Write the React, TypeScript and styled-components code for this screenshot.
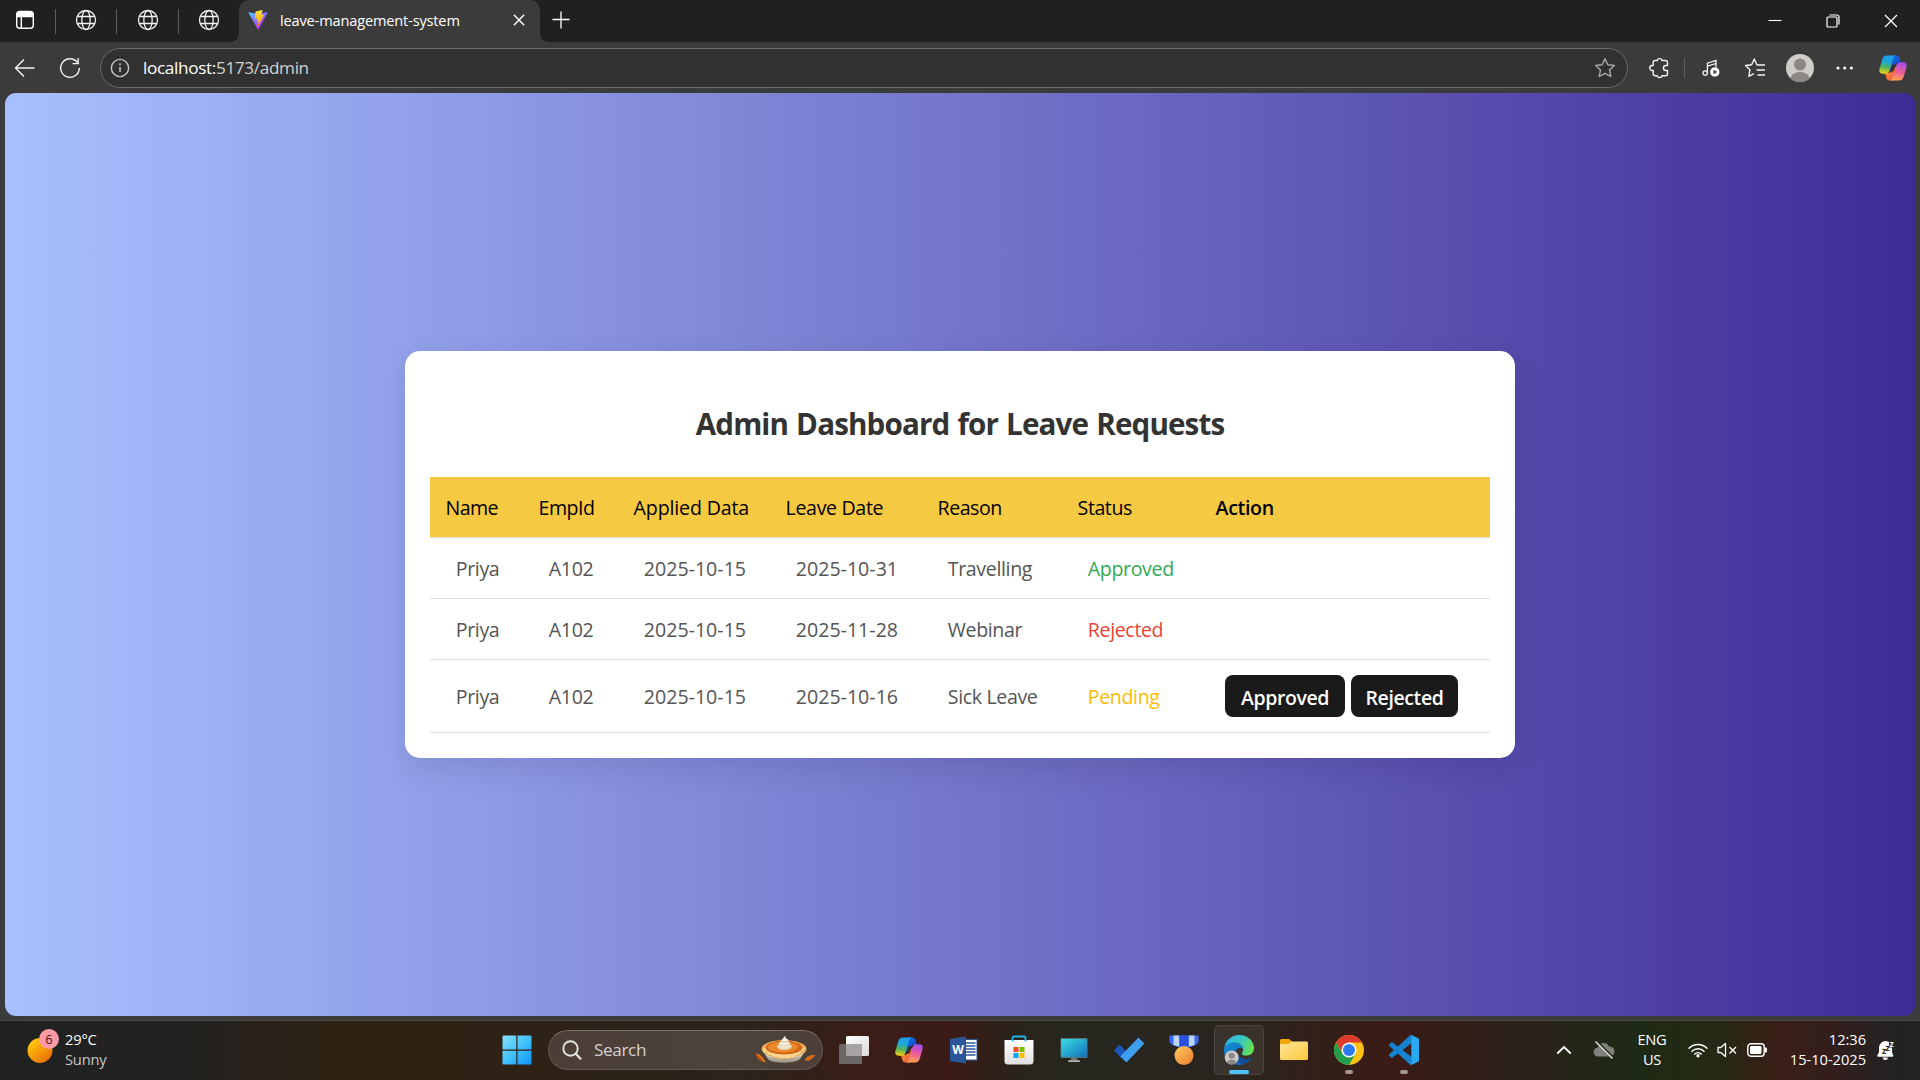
import React from 'react';
import styled, { createGlobalStyle, css } from 'styled-components';

const GlobalStyle = createGlobalStyle`
  *, *::before, *::after { box-sizing: border-box; }
  body {
    margin: 0;
    background: #3b3b3b;
    font-family: "Open Sans", "Noto Sans", sans-serif;
  }
  svg { display: block; flex: none; overflow: visible; }
`;

const Desktop = styled.div`
  width: 1920px;
  height: 1080px;
  display: flex;
  flex-direction: column;
  overflow: hidden;
  background: #3b3b3b;
`;

/* ---------- Browser tab strip ---------- */

const TabStrip = styled.header`
  height: 42px;
  flex: none;
  display: flex;
  background: #202020;
`;

const PinnedTabs = styled.div`
  width: 239px;
  padding-left: 15px;
  display: flex;
  align-items: center;
  height: 40px;
`;

const PinSeparator = styled.span<{ $before: number; $after: number }>`
  width: 1px;
  height: 25px;
  margin: 3px ${(p) => p.$after}px 0 ${(p) => p.$before}px;
  background: #5d5d5d;
`;

const ActiveTab = styled.div`
  position: relative;
  width: 301px;
  height: 42px;
  padding: 0 15px 3px 9px;
  display: flex;
  align-items: center;
  background: #3b3b3b;
  border-radius: 10px 10px 0 0;
  &::before,
  &::after {
    content: '';
    position: absolute;
    bottom: 0;
    width: 8px;
    height: 8px;
  }
  &::before {
    left: -8px;
    background: radial-gradient(circle at 0 0, transparent 7.5px, #3b3b3b 8px);
  }
  &::after {
    right: -8px;
    background: radial-gradient(circle at 100% 0, transparent 7.5px, #3b3b3b 8px);
  }
`;

const TabTitle = styled.span`
  flex: 1;
  margin-left: 12px;
  font-size: 14.6px;
  line-height: 20px;
  letter-spacing: -0.17px;
  color: #fff;
  white-space: nowrap;
`;

const NewTab = styled.div`
  margin-left: 12px;
  padding-top: 11px;
`;

const WindowControls = styled.div`
  margin-left: auto;
  padding: 14px 22px 0 0;
  display: flex;
  gap: 44px;
`;

/* ---------- Browser toolbar ---------- */

const Toolbar = styled.div`
  height: 51px;
  flex: none;
  padding: 0 12px 0 14px;
  display: flex;
  align-items: center;
`;

const NavButtons = styled.div`
  width: 86px;
  display: flex;
  gap: 23px;
`;

const AddressBar = styled.div`
  width: 1528px;
  height: 40px;
  padding: 0 11px 0 9px;
  display: flex;
  align-items: center;
  background: #313131;
  border: 1px solid #6a6a6a;
  border-radius: 20px;
`;

const Url = styled.span`
  flex: 1;
  margin-left: 13px;
  font-size: 17.2px;
  line-height: 24px;
  letter-spacing: -0.36px;
  color: #d2d2d2;
`;

const Host = styled.span`
  color: #fff;
`;

const ToolbarActions = styled.div`
  flex: 1;
  padding-left: 20px;
  display: flex;
  align-items: center;
`;

const ToolbarItem = styled.span<{ $gap: number }>`
  margin-right: ${(p) => p.$gap}px;
`;

const ToolbarSeparator = styled.span`
  width: 1px;
  height: 20px;
  margin-right: 17px;
  background: #5f5f5f;
`;

/* ---------- Web page ---------- */

const Page = styled.main`
  height: 923px;
  flex: none;
  margin: 0 5px;
  display: flex;
  align-items: center;
  justify-content: center;
  border-radius: 11px;
  background: linear-gradient(to right, #a8c0ff, #3f2b96);
`;

const Card = styled.section`
  width: 1110px;
  padding: 25px;
  background: #fff;
  border-radius: 15px;
  box-shadow: 0 10px 30px rgba(0, 0, 0, 0.1);
`;

const Title = styled.h2`
  margin: 28px 0 33px;
  font-size: 29.6px;
  line-height: 40px;
  font-weight: 700;
  letter-spacing: -0.86px;
  word-spacing: 1.2px;
  text-align: center;
  color: #333;
`;

const Table = styled.table`
  width: 1060px;
  table-layout: fixed;
  border-spacing: 0;
  font-size: 19.6px;
  white-space: nowrap;
`;

const Column = styled.col<{ $width: number }>`
  width: ${(p) => p.$width}px;
`;

const cell = css`
  border-bottom: 1px solid #ddd;
  text-align: left;
  vertical-align: middle;
`;

const HeadCell = styled.th<{ $strong?: boolean; $tracking?: number }>`
  ${cell}
  height: 61px;
  padding: 0 0 0 15.6px;
  background: #f6c942;
  color: #000;
  font-weight: ${(p) => (p.$strong ? 600 : 400)};
  letter-spacing: ${(p) => p.$tracking ?? -0.35}px;
`;

const BodyCell = styled.td<{ $tall?: boolean; $color?: string; $numeric?: boolean }>`
  ${cell}
  height: ${(p) => (p.$tall ? 73 : 61)}px;
  padding: 0 0 0 25.8px;
  color: ${(p) => p.$color ?? '#555'};
  letter-spacing: ${(p) => (p.$numeric ? 0 : -0.37)}px;
`;

const ActionCell = styled(BodyCell)`
  padding-left: 25px;
`;

const ButtonPair = styled.div`
  display: flex;
  gap: 6px;
`;

const ActionButton = styled.button<{ $width: number }>`
  width: ${(p) => p.$width}px;
  height: 42px;
  padding: 3px 0 0;
  border: 0;
  border-radius: 8px;
  background: #1a1a1a;
  color: #fff;
  font: 600 19.5px/28px 'Open Sans', 'Noto Sans', sans-serif;
  letter-spacing: -0.38px;
`;

/* ---------- Windows taskbar ---------- */

const Taskbar = styled.footer`
  height: 60px;
  margin-top: 4px;
  padding-bottom: 1px;
  flex: none;
  display: flex;
  align-items: center;
  border-top: 1px solid #474543;
  background: linear-gradient(
    to right,
    #202121 0,
    #222221 180px,
    #2f2214 340px,
    #2e2116 550px,
    #2a241a 740px,
    #3b1c16 870px,
    #3a1b15 950px,
    #2a231b 1015px,
    #26271f 1070px,
    #2a241e 1225px,
    #30211a 1300px,
    #3b1b15 1390px,
    #321f18 1460px,
    #29231a 1540px,
    #1e2a15 1640px,
    #242915 1715px,
    #3a1e17 1780px,
    #341e1b 1825px,
    #212325 1905px
  );
`;

const Weather = styled.div`
  width: 491px;
  padding: 0 0 3px 27px;
  display: flex;
  align-items: center;
  gap: 6px;
`;

const WeatherIcon = styled.div`
  padding-bottom: 6px;
`;

const SmallText = styled.div<{ $align?: string; $width?: number; $tracking?: number }>`
  width: ${(p) => (p.$width ? `${p.$width}px` : 'auto')};
  font-size: 14.7px;
  line-height: 20px;
  letter-spacing: ${(p) => p.$tracking ?? -0.2}px;
  text-align: ${(p) => p.$align ?? 'left'};
  color: #fff;
  white-space: nowrap;
`;

const Muted = styled.div`
  color: #c6c6c6;
`;

const BadgeText = styled.text`
  font: 13px 'Open Sans', sans-serif;
  fill: #3a1418;
`;

const StartButton = styled.div`
  width: 57px;
  padding-left: 11px;
`;

const SearchBox = styled.div`
  width: 275px;
  height: 40px;
  margin-right: 6px;
  padding: 0 5px 0 13px;
  display: flex;
  align-items: center;
  border: 1px solid rgba(255, 255, 255, 0.12);
  border-top-color: rgba(255, 255, 255, 0.26);
  border-radius: 20px;
  background: linear-gradient(to right, #4c3e37, #4b433b 70%, #4d3f39);
`;

const SearchLabel = styled.span`
  flex: 1;
  margin-left: 12px;
  font-size: 17.2px;
  line-height: 24px;
  letter-spacing: -0.4px;
  color: #d5d1ce;
`;

const Apps = styled.div`
  display: flex;
  gap: 5px;
`;

const AppSlot = styled.div<{ $active?: boolean }>`
  position: relative;
  width: 50px;
  height: 50px;
  display: flex;
  align-items: center;
  justify-content: center;
  border-radius: 5px;
  border: 1px solid ${(p) => (p.$active ? 'rgba(255,255,255,0.09)' : 'transparent')};
  background: ${(p) => (p.$active ? 'rgba(255,255,255,0.07)' : 'transparent')};
`;

const Indicator = styled.span<{ $active?: boolean }>`
  position: absolute;
  bottom: 0;
  width: ${(p) => (p.$active ? 20 : 8)}px;
  height: 4px;
  border-radius: 2px;
  background: ${(p) => (p.$active ? '#4cc2ff' : '#a39692')};
`;

const Tray = styled.div`
  margin-left: auto;
  padding: 0 24px 1px 0;
  display: flex;
  align-items: center;
`;

const TrayItem = styled.span<{ $gap: number; $lift?: boolean }>`
  margin-right: ${(p) => p.$gap}px;
  padding-bottom: ${(p) => (p.$lift ? 2 : 0)}px;
`;

const WordMark = styled.text`
  font: 700 12px 'Open Sans', sans-serif;
  fill: #fff;
`;

const SnoozeMark = styled.text<{ $dark?: boolean }>`
  font: 700 8.5px 'Open Sans', sans-serif;
  fill: ${(p) => (p.$dark ? '#2a1f1e' : '#fff')};
`;

/* ---------- Icons ---------- */

const WorkspaceIcon = () => (
  <svg width="20" height="20" viewBox="0 0 20 20" fill="none" stroke="#fff" strokeWidth="1.4">
    <rect x="1.7" y="1.7" width="16.6" height="16.6" rx="3" />
    <path d="M2 4.5a3 3 0 0 1 3-3h10a3 3 0 0 1 3 3v2H2z" fill="#fff" />
    <path d="M6.3 6.5v11.5" />
  </svg>
);

const GlobeIcon = () => (
  <svg width="22" height="22" viewBox="0 0 22 22" fill="none" stroke="#f2f2f2" strokeWidth="1.3">
    <circle cx="11" cy="11" r="9.5" />
    <ellipse cx="11" cy="11" rx="4.2" ry="9.5" />
    <path d="M2.4 7.5h17.2M2.4 14.5h17.2" />
  </svg>
);

const ViteIcon = () => (
  <svg width="20" height="20" viewBox="0 0 410 404" preserveAspectRatio="none">
    <defs>
      <linearGradient id="viteA" x1="6" y1="33" x2="235" y2="344" gradientUnits="userSpaceOnUse">
        <stop stopColor="#41D1FF" />
        <stop offset="1" stopColor="#BD34FE" />
      </linearGradient>
      <linearGradient id="viteB" x1="194" y1="9" x2="236" y2="293" gradientUnits="userSpaceOnUse">
        <stop stopColor="#FFEA83" />
        <stop offset=".083" stopColor="#FFDD35" />
        <stop offset="1" stopColor="#FFA800" />
      </linearGradient>
    </defs>
    <path
      fill="url(#viteA)"
      d="M399.641 59.525 215.643 388.545c-3.799 6.793-13.559 6.833-17.415.073L10.582 59.556C6.381 52.19 12.68 43.267 21.028 44.76l184.195 32.923c1.175.21 2.378.208 3.553-.006l180.343-32.87c8.32-1.517 14.649 7.337 10.522 14.719Z"
    />
    <path
      fill="url(#viteB)"
      d="M292.965 1.574 156.801 28.255a5 5 0 0 0-4.03 4.611l-8.376 141.464c-.197 3.332 2.863 5.918 6.115 5.168l37.91-8.749c3.547-.818 6.752 2.306 6.023 5.873l-11.263 55.153c-.758 3.712 2.727 6.886 6.352 5.785l23.415-7.114c3.63-1.102 7.118 2.081 6.35 5.796l-17.899 86.633c-1.12 5.419 6.088 8.374 9.094 3.728l2.008-3.103 110.954-221.428c1.858-3.707-1.346-7.935-5.418-7.15l-39.022 7.532c-3.667.707-6.787-2.708-5.752-6.296l25.469-88.291c1.036-3.594-2.095-7.012-5.766-6.293Z"
    />
  </svg>
);

const CrossIcon = ({ size, weight }: { size: number; weight: number }) => (
  <svg width={size} height={size} viewBox="0 0 14 14" stroke="#fff" strokeWidth={weight}>
    <path d="M1 1l12 12M13 1L1 13" />
  </svg>
);

const PlusIcon = () => (
  <svg width="18" height="18" viewBox="0 0 18 18" stroke="#fff" strokeWidth="1.3">
    <path d="M9 .5v17M.5 8.5h17" />
  </svg>
);

const MinimizeIcon = () => (
  <svg width="14" height="14" viewBox="0 0 14 14" stroke="#fff" strokeWidth="1.1">
    <path d="M.5 6.5h13" />
  </svg>
);

const RestoreIcon = () => (
  <svg width="14" height="14" viewBox="0 0 14 14" fill="none" stroke="#fff" strokeWidth="1.2">
    <rect x="1" y="3" width="10" height="10" rx="1" />
    <path d="M3.500 1h7.500a2 2 0 0 1 2 2v7.500" />
  </svg>
);

const BackIcon = () => (
  <svg width="22" height="22" viewBox="0 0 22 22" fill="none" stroke="#f4f4f4" strokeWidth="1.4">
    <path d="M20.5 11H1.5M10 2.5L1.5 11l8.5 8.5" />
  </svg>
);

const ReloadIcon = () => (
  <svg width="22" height="22" viewBox="0 0 22 22" fill="none" stroke="#f4f4f4" strokeWidth="1.4">
    <path d="M18.5 5.5A9.3 9.3 0 1 0 20.3 11" />
    <path d="M19.2 1v5.6h-5.6" />
  </svg>
);

const InfoIcon = () => (
  <svg width="20" height="20" viewBox="0 0 20 20" fill="none" stroke="#c4c4c4" strokeWidth="1.4">
    <circle cx="10" cy="10" r="8.6" />
    <path d="M10 9v5" strokeWidth="1.6" />
    <circle cx="10" cy="6.3" r="1" fill="#c4c4c4" stroke="none" />
  </svg>
);

const StarIcon = () => (
  <svg width="22" height="22" viewBox="0 0 22 22" fill="none" stroke="#a9a9a9" strokeWidth="1.4" strokeLinejoin="round">
    <path d="M11 1.700l2.800 6 6.500.800-4.800 4.500 1.300 6.500L11 16.300l-5.800 3.200 1.300-6.500-4.800-4.500 6.500-.800z" />
  </svg>
);

const PuzzleIcon = () => (
  <svg width="22" height="22" viewBox="0 0 22 22" fill="none" stroke="#f2f2f2" strokeWidth="1.4" strokeLinejoin="round">
    <path d="M5.200 5.500a2 2 0 0 1 2-2h1.900a2.600 2.600 0 0 1 5 0H17.500a2 2 0 0 1 2 2v3h-1.600a2.500 2.500 0 0 0 0 5h1.600v3.200a2 2 0 0 1-2 2h-3.400a2.600 2.600 0 0 1-5 0H7.200a2 2 0 0 1-2-2v-3.200H4.300a2.500 2.500 0 0 1 0-5h.9z" />
  </svg>
);

const MusicIcon = () => (
  <svg width="18" height="18" viewBox="0 0 18 18" fill="none" stroke="#f2f2f2" strokeWidth="1.3">
    <circle cx="3.2" cy="14" r="2.200" />
    <path d="M5.400 14V4.200L14 1.500V8M5.400 7.200L14 4.500" />
    <circle cx="12.800" cy="13" r="4.700" fill="#fff" stroke="none" />
    <path d="M11.500 10.700l3.800 2.300-3.800 2.300z" fill="#3b3b3b" stroke="none" />
  </svg>
);

const FavoritesIcon = () => (
  <svg width="22" height="22" viewBox="0 0 22 22" fill="none" stroke="#f2f2f2" strokeWidth="1.4" strokeLinejoin="round">
    <path d="M14 7.700L12.700 7.500 10.300 2 7.600 7.700l-6 .800 4.300 4.300-1 6.500 5-2.600" />
    <path d="M13.500 8h7.500M12.500 13H21M13.500 18H21" />
  </svg>
);

const Avatar = ({ size }: { size: number }) => (
  <svg width={size} height={size} viewBox="0 0 28 28">
    <defs>
      <clipPath id={`avatar${size}`}>
        <circle cx="14" cy="14" r="14" />
      </clipPath>
    </defs>
    <g clipPath={`url(#avatar${size})`}>
      <rect width="28" height="28" fill="#cfcdca" />
      <circle cx="14" cy="10.500" r="6" fill="#8b8785" />
      <ellipse cx="14" cy="26" rx="10" ry="8" fill="#8b8785" />
    </g>
  </svg>
);

const DotsIcon = () => (
  <svg width="18" height="4" viewBox="0 0 18 4" fill="#f4f4f4">
    <circle cx="2" cy="2" r="1.600" />
    <circle cx="8.700" cy="2" r="1.600" />
    <circle cx="15.400" cy="2" r="1.600" />
  </svg>
);

const CopilotIcon = ({ id }: { id: string }) => (
  <svg width="28" height="26" viewBox="0 0 28 26">
    <defs>
      <linearGradient id={`${id}l`} x1=".5" y1="0" x2=".35" y2="1">
        <stop offset="0" stopColor="#1a9cf0" />
        <stop offset=".35" stopColor="#1fa8d8" />
        <stop offset=".65" stopColor="#52b45a" />
        <stop offset="1" stopColor="#f3cf12" />
      </linearGradient>
      <linearGradient id={`${id}r`} x1=".6" y1="0" x2=".4" y2="1">
        <stop offset="0" stopColor="#a24df0" />
        <stop offset=".5" stopColor="#ee5a9c" />
        <stop offset="1" stopColor="#ffa34f" />
      </linearGradient>
      <linearGradient id={`${id}t`} x1="0" y1="0" x2="1" y2="1">
        <stop offset="0" stopColor="#1579e6" />
        <stop offset="1" stopColor="#1236c4" />
      </linearGradient>
      <linearGradient id={`${id}b`} x1="0" y1="0" x2="1" y2="1">
        <stop offset="0" stopColor="#f8a12c" />
        <stop offset="1" stopColor="#ee4f4a" />
      </linearGradient>
    </defs>
    <path d="M13 .5h4.500c1.800 0 2.700 1 3.200 2.700L22 8h-3.500c-2 0-3 1.200-3.500 3l-1 3.500h-3z" fill={`url(#${id}t)`} />
    <path d="M15 25.500h-4.500c-1.800 0-2.700-1-3.200-2.700L6 18h3.500c2 0 3-1.200 3.500-3l1-3.500h3z" fill={`url(#${id}b)`} />
    <path d="M13.400 9.500h3.400l-2.200 7h-3.400z" fill="#33302f" />
    <path d="M8 .5h9c-1.700.3-2.500 1.700-3 3.500l-3.300 11.300C10 17.500 9 18.700 7 18.700H3.500C1 18.700-.2 17 .4 14.300L3.300 4.200C4 1.800 5.500.5 8 .5z" fill={`url(#${id}l)`} />
    <path d="M20 25.500h-9c1.700-.3 2.500-1.700 3-3.500l3.300-11.300C18 8.500 19 7.300 21 7.300h3.500c2.500 0 3.700 1.700 3.100 4.400L24.700 21.800c-.7 2.400-2.200 3.700-4.700 3.700z" fill={`url(#${id}r)`} />
  </svg>
);

const SunIcon = () => (
  <svg width="32" height="36" viewBox="0 0 32 36">
    <defs>
      <linearGradient id="sun" x1=".1" y1=".1" x2=".8" y2="1">
        <stop offset="0" stopColor="#ffcc0c" />
        <stop offset="1" stopColor="#ea6a04" />
      </linearGradient>
    </defs>
    <circle cx="13" cy="22.500" r="12.500" fill="url(#sun)" />
    <circle cx="22" cy="11" r="10" fill="#ff9aa5" />
    <BadgeText x="22" y="15.800" textAnchor="middle">6</BadgeText>
  </svg>
);

const WindowsIcon = () => (
  <svg width="30" height="30" viewBox="0 0 30 30">
    <defs>
      <linearGradient id="win" x1="0" y1="0" x2="30" y2="30" gradientUnits="userSpaceOnUse">
        <stop offset="0" stopColor="#8be1fb" />
        <stop offset=".5" stopColor="#43c1fb" />
        <stop offset="1" stopColor="#0a92f5" />
      </linearGradient>
    </defs>
    <path d="M1.500.5H14.300v14H.5v-13a1 1 0 0 1 1-1zM15.500.5h13a1 1 0 0 1 1 1v13h-14zM.5 15.700h13.800v13.800H1.500a1 1 0 0 1-1-1zM15.500 15.700h14v12.800a1 1 0 0 1-1 1h-13z" fill="url(#win)" />
  </svg>
);

const SearchIcon = () => (
  <svg width="20" height="20" viewBox="0 0 20 20" fill="none" stroke="#e6e3e1" strokeLinecap="round">
    <circle cx="8.500" cy="8.500" r="7.200" strokeWidth="1.900" />
    <path d="M13.800 13.800l4.700 5" strokeWidth="2.200" />
  </svg>
);

const PieIcon = () => (
  <svg width="62" height="30" viewBox="0 0 62 30">
    <defs>
      <linearGradient id="dish" x1="0" y1="0" x2="0" y2="1">
        <stop offset="0" stopColor="#f0ece2" />
        <stop offset="1" stopColor="#a79f90" />
      </linearGradient>
    </defs>
    <path d="M1 18.500c5 0 8 4 9 8.500-4.500 0-9-3-9-8.500z" fill="#b5500f" />
    <path d="M1.500 19c3 1 5 4 8.500 8" stroke="#f08a2c" strokeWidth="1.200" fill="none" />
    <path d="M60.500 20c-5-.5-9 1-11 5.500 4 1 8-1 11-5.500z" fill="#d66a18" />
    <path d="M8 16l5 8c3 4.500 27 5 32 0l5-8z" fill="url(#dish)" />
    <path d="M11 21l3 4c4 3 26 3 30 0l3-4c-6 4-30 4-36 0z" fill="#8f8778" opacity=".35" />
    <ellipse cx="29" cy="14" rx="22.500" ry="9" fill="#f3b45a" />
    <path d="M7.500 13q0 5 4 4.500 1 4 5 3 2 3.500 6 2 3 2.500 6.500.5 4 2 7-.5 4 1 5.500-2 4 0 5-3.500 4-.5 4-4" fill="#fbd892" stroke="#d99a48" strokeWidth=".7" />
    <ellipse cx="29" cy="12.600" rx="18.500" ry="7" fill="#d4681a" />
    <ellipse cx="28" cy="12.100" rx="15" ry="5.200" fill="#ea8a2b" />
    <ellipse cx="29.500" cy="11.500" rx="7.300" ry="3.600" fill="#e9dcc2" />
    <ellipse cx="29.500" cy="9" rx="5.700" ry="3.200" fill="#fff8ea" />
    <ellipse cx="29.800" cy="6" rx="3.800" ry="2.600" fill="#f4e8d0" />
    <path d="M27.500 5.500q.5-3.500 2.500-4.500 1 3 2.200 4.500z" fill="#fff8ea" />
    <path d="M24 9.800q5 2.500 11-.5M26 6.500q4 1.500 7.500-.5" fill="none" stroke="#cfb98f" strokeWidth=".8" />
  </svg>
);

const TaskViewIcon = () => (
  <svg width="30" height="28" viewBox="0 0 30 28">
    <defs>
      <linearGradient id="tv" x1="0" y1="0" x2="1" y2="1">
        <stop offset="0" stopColor="#fff" />
        <stop offset="1" stopColor="#dcdada" />
      </linearGradient>
    </defs>
    <rect x="7" y="0" width="23" height="20" rx="1.500" fill="url(#tv)" />
    <rect x="0" y="8" width="23" height="20" rx="1.500" fill="#6b6766" />
    <path d="M7 8h16v12H8.500A1.500 1.500 0 0 1 7 18.500z" fill="#a6a3a2" />
  </svg>
);

const WordIcon = () => (
  <svg width="28" height="28" viewBox="0 0 28 28">
    <rect x="13" y="3.500" width="14" height="20.500" fill="#fff" stroke="#2b579a" strokeWidth="1" />
    <path d="M16 7h9.500M16 10h9.500M16 13h9.500M16 16h9.500M16 19h9.500" stroke="#2b579a" strokeWidth="1.400" />
    <path d="M0 3L16 .5v27L0 25z" fill="#2b579a" />
    <WordMark x="8" y="18.300" textAnchor="middle">W</WordMark>
  </svg>
);

const StoreIcon = () => (
  <svg width="30" height="30" viewBox="0 0 30 30">
    <defs>
      <linearGradient id="bag" x1="0" y1="0" x2="0" y2="1">
        <stop offset="0" stopColor="#fff" />
        <stop offset="1" stopColor="#dfdfdf" />
      </linearGradient>
    </defs>
    <path d="M8.500 7V3A1.500 1.500 0 0 1 10 1.500h10A1.500 1.500 0 0 1 21.500 3v4" fill="none" stroke="#1fb4ea" strokeWidth="1.800" />
    <path d="M.5 5h29v21a3.500 3.500 0 0 1-3.500 3.500H4A3.500 3.500 0 0 1 .5 26z" fill="url(#bag)" />
    <path d="M9.500 12h5v5h-5z" fill="#e8501f" />
    <path d="M15.500 12h5v5h-5z" fill="#7fba00" />
    <path d="M9.500 18h5v5h-5z" fill="#00a4ef" />
    <path d="M15.500 18h5v5h-5z" fill="#ffb900" />
    <path d="M8.500 5v1.500M21.500 5v1.500" stroke="#1fb4ea" strokeWidth="1.800" />
  </svg>
);

const MonitorIcon = () => (
  <svg width="28" height="26" viewBox="0 0 28 26">
    <defs>
      <linearGradient id="screen" x1="0" y1="0" x2="1" y2="1">
        <stop offset="0" stopColor="#3bdbe2" />
        <stop offset="1" stopColor="#1272be" />
      </linearGradient>
    </defs>
    <rect x=".5" y="1" width="27" height="20" rx="1" fill="#59727c" />
    <rect x="1.200" y="2" width="25.600" height="18" fill="url(#screen)" />
    <path d="M11 21h6v2.500h-6z" fill="#6f7478" />
    <rect x="8" y="23.300" width="12" height="1.700" rx=".8" fill="#b5b8ba" />
  </svg>
);

const TodoIcon = () => (
  <svg width="30" height="26" viewBox="0 0 30 26" strokeLinejoin="round">
    <path d="M5.500 8.500l7 7-5 5L1 13.500z" fill="#1b57bf" stroke="#1b57bf" strokeWidth="1.200" />
    <path d="M24.500 1.500l5 5L12.500 24.500 7.200 19.500z" fill="#3f9ff0" stroke="#3f9ff0" strokeWidth="1.200" />
  </svg>
);

const MedalIcon = () => (
  <svg width="30" height="30" viewBox="0 0 30 30">
    <defs>
      <linearGradient id="medal" x1="0" y1="0" x2="1" y2="1">
        <stop offset="0" stopColor="#fccb58" />
        <stop offset="1" stopColor="#ec7a35" />
      </linearGradient>
    </defs>
    <path d="M.5.5h29v7l-3 2.500-8 3h-7l-8-3-3-2.500z" fill="#3c6af2" />
    <path d="M4.500.5H10v11L4.500 10zM20 .5h5.500V10L20 11.500z" fill="#bcd6fb" />
    <path d="M11 .5h8V13h-8z" fill="#2b4fe0" />
    <circle cx="15" cy="20.500" r="9.500" fill="url(#medal)" />
  </svg>
);

const EdgeIcon = () => (
  <svg width="30" height="30" viewBox="0 0 30 30">
    <defs>
      <linearGradient id="edgeTop" x1="0" y1=".3" x2="1" y2=".6">
        <stop offset="0" stopColor="#2fb6ea" />
        <stop offset=".5" stopColor="#35c7c4" />
        <stop offset="1" stopColor="#6be04e" />
      </linearGradient>
      <linearGradient id="edgeMid" x1="0" y1="0" x2=".6" y2="1">
        <stop offset="0" stopColor="#1390dc" />
        <stop offset="1" stopColor="#1168b8" />
      </linearGradient>
    </defs>
    <path d="M0 15C0 10.500 5 7.300 11 7.600c4.700.3 7.600 3.300 8 6C16 11.800 11 13.500 11 19c0 5 4 10 9.500 10-1.800.7-3.800 1-5.500 1C6 30 0 23.500 0 15z" fill="url(#edgeMid)" />
    <path d="M11 18c-1 6 4.500 11.800 10 10.700 3-1.100 5.300-3.200 6.700-5.400.3-.5-.2-.8-.7-.6-1.500.8-3.200 1.200-5 1.200-5 0-9.200-3.400-9.200-7.400-1 .3-1.700.9-1.800 1.500z" fill="#0f4f98" />
    <path d="M.3 13C1.500 5.500 7.500 0 15 0c9 0 15 6.500 15 13 0 5-3.500 7.600-7.500 7.600-3.200 0-4.900-1-4.700-2.100.2-.7 1.300-1.500 1.300-4C19.100 11 15.500 7.600 11 7.600c-5 0-9 2-10.700 5.400z" fill="url(#edgeTop)" />
    <circle cx="7.700" cy="22.500" r="7" fill="#cbc9c7" />
    <circle cx="7.700" cy="20.800" r="3" fill="#8b8785" />
    <path d="M2.900 27.600a5 4 0 0 1 9.600 0 7 7 0 0 1-9.600 0z" fill="#8b8785" />
  </svg>
);

const FolderIcon = () => (
  <svg width="28" height="22" viewBox="0 0 28 22">
    <defs>
      <linearGradient id="folder" x1="0" y1="0" x2="1" y2="1">
        <stop offset="0" stopColor="#ffe59c" />
        <stop offset="1" stopColor="#fcc93b" />
      </linearGradient>
    </defs>
    <path d="M1.500 0H9l3 2.500V6H0V1.500A1.500 1.500 0 0 1 1.500 0z" fill="#f5a60c" />
    <path d="M0 5h8.500l3-2.500h15A1.500 1.500 0 0 1 28 4v15.500a1.500 1.500 0 0 1-1.500 1.500h-25A1.500 1.500 0 0 1 0 19.500z" fill="url(#folder)" />
  </svg>
);

const ChromeIcon = () => (
  <svg width="30" height="30" viewBox="0 0 30 30">
    <circle cx="15" cy="15" r="15" fill="#fbc116" />
    <path d="M15 15L8.900 18.500 2 7.500A15 15 0 0 1 28 7.500H15z" fill="#de3a2d" />
    <path d="M2 7.500A15 15 0 0 0 15 30l6.500-11.300L15 15 8.500 18.700z" fill="#229f4c" />
    <circle cx="15" cy="15" r="7.500" fill="#fff" />
    <circle cx="15" cy="15" r="6" fill="#2c7bf0" />
  </svg>
);

const CodeIcon = () => (
  <svg width="30" height="30" viewBox="0 0 24 24">
    <path
      fill="#1583cf"
      d="M23.15 2.587L18.21.21a1.494 1.494 0 0 0-1.705.29l-9.46 8.63-4.12-3.128a.999.999 0 0 0-1.276.057L.327 7.261A1 1 0 0 0 .326 8.74L3.899 12 .326 15.26a1 1 0 0 0 .001 1.479L1.65 17.94a.999.999 0 0 0 1.276.057l4.12-3.128 9.46 8.63a1.492 1.492 0 0 0 1.704.29l4.942-2.377A1.5 1.5 0 0 0 24 20.06V3.939a1.5 1.5 0 0 0-.85-1.352zm-5.146 14.861L10.826 12l7.178-5.448v10.896z"
    />
    <path d="M18 .2l5.150 2.387A1.500 1.500 0 0 1 24 3.939V20.060a1.500 1.500 0 0 1-.85 1.350L18 23.800z" fill="#2aa9f2" />
  </svg>
);

const ChevronIcon = () => (
  <svg width="16" height="10" viewBox="0 0 16 10" fill="none" stroke="#fff" strokeWidth="1.800" strokeLinecap="round">
    <path d="M1.800 8L8 2l6.200 6" />
  </svg>
);

const CloudOffIcon = () => (
  <svg width="22" height="20" viewBox="0 0 22 20">
    <path d="M5.500 16.500A4.500 4.500 0 0 1 4.800 7.500 6 6 0 0 1 16 6.500a5 5 0 0 1 1 10z" fill="#7f817c" />
    <path d="M3.500 1.500l16.500 16.500" stroke="#232a17" strokeWidth="3" />
    <path d="M2.500 1.500l17 17" stroke="#e8e8e8" strokeWidth="1.400" />
  </svg>
);

const WifiIcon = () => (
  <svg width="20" height="16" viewBox="0 0 20 16" fill="none" stroke="#fff" strokeWidth="1.500" strokeLinecap="round">
    <path d="M1 6.200a12.600 12.600 0 0 1 18 0M4 9.300a8.500 8.500 0 0 1 12 0M6.800 12a4.600 4.600 0 0 1 6.400 0" />
    <circle cx="10" cy="13.800" r="1.700" fill="#fff" stroke="none" />
  </svg>
);

const MuteIcon = () => (
  <svg width="20" height="16" viewBox="0 0 20 16" fill="none" stroke="#fff" strokeWidth="1.300" strokeLinejoin="round">
    <path d="M1 5.500v5h2.800L8.500 14.500v-13L3.800 5.500z" />
    <path d="M12.500 5l6.500 6.500M19 5l-6.500 6.500" />
  </svg>
);

const BatteryIcon = () => (
  <svg width="21" height="14" viewBox="0 0 21 14">
    <rect x=".8" y=".8" width="16.400" height="12.400" rx="3" fill="none" stroke="#fff" strokeWidth="1.400" />
    <rect x="3" y="3" width="11.500" height="8" rx="1.300" fill="#fff" />
    <path d="M18 4.500h.8A1.200 1.200 0 0 1 20 5.700v2.600a1.200 1.200 0 0 1-1.200 1.200H18z" fill="#fff" />
  </svg>
);

const BellIcon = () => (
  <svg width="19" height="22" viewBox="0 0 19 22">
    <path d="M8.500 2A6.500 6.500 0 0 0 2 8.500V13L.3 16.500a.8.8 0 0 0 .7 1.200h14.500a.8.8 0 0 0 .7-1.200L15 13V8.500A6.500 6.500 0 0 0 8.500 2z" fill="#fff" />
    <path d="M5.800 18.500h5a2.500 2.500 0 0 1-5 0z" fill="#fff" />
    <rect x="12" y="1" width="6" height="7.500" fill="#272322" />
    <SnoozeMark $dark x="5" y="14.500">z</SnoozeMark>
    <SnoozeMark $dark x="8.500" y="11.500">z</SnoozeMark>
    <SnoozeMark x="12.500" y="8">z</SnoozeMark>
  </svg>
);

/* ---------- Data ---------- */

type Status = 'Approved' | 'Rejected' | 'Pending';

interface LeaveRequest {
  name: string;
  empId: string;
  applied: string;
  leave: string;
  reason: string;
  status: Status;
}

const columnWidths = [93, 95, 152, 152, 140, 138, 290];

const headings = [
  { label: 'Name', tracking: -0.65 },
  { label: 'EmpId', tracking: -0.5 },
  { label: 'Applied Data', tracking: -0.15 },
  { label: 'Leave Date', tracking: -0.35 },
  { label: 'Reason', tracking: -0.5 },
  { label: 'Status', tracking: -0.45 },
];

const statusColors: Record<Status, string> = {
  Approved: '#34a853',
  Rejected: '#ea4335',
  Pending: '#fbbc05',
};

const requests: LeaveRequest[] = [
  { name: 'Priya', empId: 'A102', applied: '2025-10-15', leave: '2025-10-31', reason: 'Travelling', status: 'Approved' },
  { name: 'Priya', empId: 'A102', applied: '2025-10-15', leave: '2025-11-28', reason: 'Webinar', status: 'Rejected' },
  { name: 'Priya', empId: 'A102', applied: '2025-10-15', leave: '2025-10-16', reason: 'Sick Leave', status: 'Pending' },
];

const RequestRow = ({ request }: { request: LeaveRequest }) => {
  const pending = request.status === 'Pending';
  return (
    <tr>
      <BodyCell $tall={pending}>{request.name}</BodyCell>
      <BodyCell $tall={pending}>{request.empId}</BodyCell>
      <BodyCell $tall={pending} $numeric>{request.applied}</BodyCell>
      <BodyCell $tall={pending} $numeric>{request.leave}</BodyCell>
      <BodyCell $tall={pending}>{request.reason}</BodyCell>
      <BodyCell $tall={pending} $color={statusColors[request.status]}>{request.status}</BodyCell>
      <ActionCell $tall={pending}>
        {pending && (
          <ButtonPair>
            <ActionButton $width={120}>Approved</ActionButton>
            <ActionButton $width={107}>Rejected</ActionButton>
          </ButtonPair>
        )}
      </ActionCell>
    </tr>
  );
};

export default function App() {
  return (
    <Desktop>
      <GlobalStyle />
      <TabStrip>
        <PinnedTabs>
          <WorkspaceIcon />
          <PinSeparator $before={20} $after={19} />
          <GlobeIcon />
          <PinSeparator $before={19} $after={20} />
          <GlobeIcon />
          <PinSeparator $before={19} $after={19} />
          <GlobeIcon />
        </PinnedTabs>
        <ActiveTab>
          <ViteIcon />
          <TabTitle>leave-management-system</TabTitle>
          <CrossIcon size={12} weight={1.7} />
        </ActiveTab>
        <NewTab>
          <PlusIcon />
        </NewTab>
        <WindowControls>
          <MinimizeIcon />
          <RestoreIcon />
          <CrossIcon size={14} weight={1.3} />
        </WindowControls>
      </TabStrip>

      <Toolbar>
        <NavButtons>
          <BackIcon />
          <ReloadIcon />
        </NavButtons>
        <AddressBar>
          <InfoIcon />
          <Url>
            <Host>localhost:</Host>5173/admin
          </Url>
          <StarIcon />
        </AddressBar>
        <ToolbarActions>
          <ToolbarItem $gap={14}><PuzzleIcon /></ToolbarItem>
          <ToolbarSeparator />
          <ToolbarItem $gap={24}><MusicIcon /></ToolbarItem>
          <ToolbarItem $gap={20}><FavoritesIcon /></ToolbarItem>
          <ToolbarItem $gap={22}><Avatar size={28} /></ToolbarItem>
          <ToolbarItem $gap={25}><DotsIcon /></ToolbarItem>
          <CopilotIcon id="bar" />
        </ToolbarActions>
      </Toolbar>

      <Page>
        <Card>
          <Title>Admin Dashboard for Leave Requests</Title>
          <Table>
            <colgroup>
              {columnWidths.map((width, index) => (
                <Column key={index} $width={width} />
              ))}
            </colgroup>
            <thead>
              <tr>
                {headings.map(({ label, tracking }) => (
                  <HeadCell key={label} $tracking={tracking}>{label}</HeadCell>
                ))}
                <HeadCell $strong>Action</HeadCell>
              </tr>
            </thead>
            <tbody>
              {requests.map((request) => (
                <RequestRow key={request.leave} request={request} />
              ))}
            </tbody>
          </Table>
        </Card>
      </Page>

      <Taskbar>
        <Weather>
          <WeatherIcon>
            <SunIcon />
          </WeatherIcon>
          <SmallText>
            29°C
            <Muted>Sunny</Muted>
          </SmallText>
        </Weather>
        <StartButton>
          <WindowsIcon />
        </StartButton>
        <SearchBox>
          <SearchIcon />
          <SearchLabel>Search</SearchLabel>
          <PieIcon />
        </SearchBox>
        <Apps>
          <AppSlot><TaskViewIcon /></AppSlot>
          <AppSlot><CopilotIcon id="task" /></AppSlot>
          <AppSlot><WordIcon /></AppSlot>
          <AppSlot><StoreIcon /></AppSlot>
          <AppSlot><MonitorIcon /></AppSlot>
          <AppSlot><TodoIcon /></AppSlot>
          <AppSlot><MedalIcon /></AppSlot>
          <AppSlot $active><EdgeIcon /><Indicator $active /></AppSlot>
          <AppSlot><FolderIcon /></AppSlot>
          <AppSlot><ChromeIcon /><Indicator /></AppSlot>
          <AppSlot><CodeIcon /><Indicator /></AppSlot>
        </Apps>
        <Tray>
          <TrayItem $gap={21}><ChevronIcon /></TrayItem>
          <TrayItem $gap={19}><CloudOffIcon /></TrayItem>
          <TrayItem $gap={18} $lift>
            <SmallText $align="center" $width={36} $tracking={-0.3}>
              ENG
              <div>US</div>
            </SmallText>
          </TrayItem>
          <TrayItem $gap={9}><WifiIcon /></TrayItem>
          <TrayItem $gap={10}><MuteIcon /></TrayItem>
          <TrayItem $gap={10}><BatteryIcon /></TrayItem>
          <TrayItem $gap={11} $lift>
            <SmallText $align="right" $width={88} $tracking={-0.05}>
              12:36
              <div>15-10-2025</div>
            </SmallText>
          </TrayItem>
          <BellIcon />
        </Tray>
      </Taskbar>
    </Desktop>
  );
}
